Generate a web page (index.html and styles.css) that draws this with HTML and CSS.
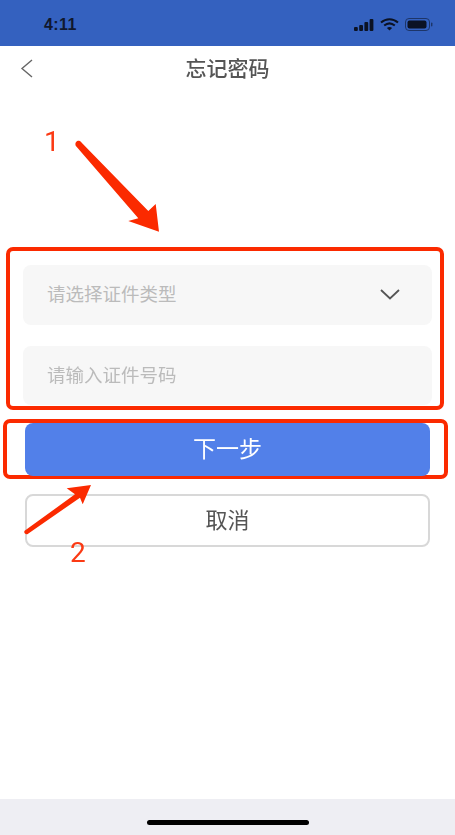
FILE: index.html
```html
<!DOCTYPE html>
<html lang="zh-CN">
<head>
    <meta charset="UTF-8">
    <meta name="viewport" content="width=device-width, initial-scale=1.0">
    <title>忘记密码</title>
    <link rel="stylesheet" href="styles.css">
</head>
<body>
    <div class="page">
        <div class="status-bar">
            <span class="time">4:11</span>
            <div class="status-icons">
                <svg width="20" height="12" viewBox="0 0 20 12">
                    <rect x="0" y="8" width="3.8" height="4" rx="1" />
                    <rect x="5.2" y="6" width="3.8" height="6" rx="1" />
                    <rect x="10.4" y="3" width="3.8" height="9" rx="1" />
                    <rect x="15.6" y="0" width="3.8" height="12" rx="1" />
                </svg>
                <svg class="wifi" width="19" height="13" viewBox="0 0 19 13">
                    <path d="M1 4.5C6 0 13 0 18 4.5" />
                    <path d="M4.2 7.6C7.4 4.9 11.6 4.9 14.8 7.6" />
                    <path class="dot" d="M9.5 12.6 6.9 9.9C8.4 8.8 10.6 8.8 12.1 9.9Z" />
                </svg>
                <svg width="28" height="13" viewBox="0 0 28 13">
                    <rect class="batt-edge" x="0.5" y="0.5" width="24" height="12" rx="3.5" />
                    <rect x="2.5" y="2.5" width="19" height="8" rx="2" />
                    <rect class="batt-cap" x="26" y="4.5" width="1.4" height="4" rx="0.7" />
                </svg>
            </div>
        </div>

        <div class="nav-bar">
            <svg class="back" width="14" height="19" viewBox="0 0 14 19">
                <path d="M12 1 2 9.5 12 18" />
            </svg>
            <h1>忘记密码</h1>
        </div>

        <div class="content">
            <div class="mark-form">
                <div class="field">
                    <span class="field-text">请选择证件类型</span>
                    <svg class="chevron" width="20" height="11" viewBox="0 0 20 11">
                        <path d="M1 1 10 9.5 19 1" />
                    </svg>
                </div>
                <div class="field">
                    <span class="field-text">请输入证件号码</span>
                </div>
            </div>
            <div class="mark-next">
                <button class="btn btn-primary">下一步</button>
            </div>
            <button class="btn btn-cancel">取消</button>
        </div>

        <div class="home-bar">
            <div class="home-indicator"></div>
        </div>

        <span class="step-num step-one">1</span>
        <span class="step-num step-two">2</span>
        <svg class="arrows" width="455" height="835" viewBox="0 0 455 835">
            <path d="M75.7 145.7C74.6 142.5 77 140.6 79 140.8 80.2 141 81 141.8 81.7 142.7L148.3 211 155.7 204 159 231.7 128.3 221 138.3 218.3Z" />
            <path d="M91 485 66.7 488.3 75 494.3 24.6 530.8C23.4 533 25.8 535 27.7 534L80 497.7 82.7 504.3Z" />
        </svg>
    </div>
</body>
</html>
```

FILE: styles.css
```css
body {
    margin: 0;
    background: #fff;
    font-family: "Liberation Sans", "Noto Sans CJK SC", sans-serif;
}
.page {
    position: relative;
    width: 455px;
    height: 835px;
    overflow: hidden;
    display: flex;
    flex-direction: column;
    filter: blur(0.35px);
}
.status-bar {
    height: 46px;
    background: #3461bf;
    display: flex;
    align-items: center;
    justify-content: space-between;
    padding: 3px 22px 0 44px;
    box-sizing: border-box;
    flex-shrink: 0;
}
.time {
    font-size: 16px;
    font-weight: bold;
    color: #10182e;
    letter-spacing: 0.4px;
}
.status-icons {
    display: flex;
    align-items: center;
    gap: 6px;
}
.status-icons svg {
    fill: #0b1224;
}
.wifi path {
    fill: none;
    stroke: #0b1224;
    stroke-width: 2;
}
.wifi .dot {
    fill: #0b1224;
    stroke: none;
}
.batt-edge {
    fill: none;
    stroke: #1d3568;
}
.batt-cap {
    fill: #1d3568;
}
.nav-bar {
    height: 44px;
    position: relative;
    display: flex;
    align-items: center;
    justify-content: center;
    flex-shrink: 0;
}
.nav-bar h1 {
    margin: 0 0 2px;
    font-size: 21px;
    font-weight: 500;
    color: #555;
}
.back {
    position: absolute;
    left: 20px;
    top: 13px;
    fill: none;
    stroke: #666;
    stroke-width: 1.4;
}
.content {
    flex: 1;
    padding-top: 157px;
}
.mark-form {
    margin-left: 6px;
    width: 438px;
    height: 163px;
    box-sizing: border-box;
    border: 4px solid #fb2a00;
    border-radius: 7px;
    padding: 14px 8px 0 13px;
    display: flex;
    flex-direction: column;
    gap: 21px;
}
.field {
    height: 59.5px;
    background: #f7f7f7;
    border-radius: 8px;
    display: flex;
    align-items: center;
    justify-content: space-between;
    padding: 0 32px 0 24px;
    font-size: 18.5px;
    color: #bbb;
    flex-shrink: 0;
}
.field-text {
    margin-bottom: 3px;
}
.chevron {
    fill: none;
    stroke: #555;
    stroke-width: 1.8;
}
.mark-next {
    margin: 9px 0 0 3px;
    width: 445px;
    height: 60px;
    box-sizing: border-box;
    border: 4px solid #fb2a00;
    border-radius: 7px;
    padding: 0 14px 0 18px;
}
.btn {
    display: block;
    width: 405px;
    height: 53px;
    box-sizing: border-box;
    border-radius: 8px;
    font-family: inherit;
    font-size: 23px;
    padding: 0 0 5px;
}
.btn-primary {
    background: #5280e9;
    color: #fff;
    border: none;
}
.btn-cancel {
    margin: 15px 0 0 25px;
    background: #fff;
    color: #555;
    border: 2.5px solid #d8d8d8;
    font-size: 22px;
}
.home-bar {
    height: 36px;
    background: #eeeef3;
    display: flex;
    justify-content: center;
    padding-top: 21px;
    box-sizing: border-box;
    flex-shrink: 0;
}
.home-indicator {
    width: 162px;
    height: 5px;
    background: #000;
    border-radius: 3px;
}
.step-num {
    position: absolute;
    font-family: Roboto, sans-serif;
    font-weight: 400;
    font-size: 28px;
    line-height: 30px;
    color: #fb3a14;
}
.step-one {
    left: 44px;
    top: 127px;
}
.step-two {
    left: 70px;
    top: 538px;
}
.arrows {
    position: absolute;
    left: 0;
    top: 0;
    fill: #fb2a00;
}
```
